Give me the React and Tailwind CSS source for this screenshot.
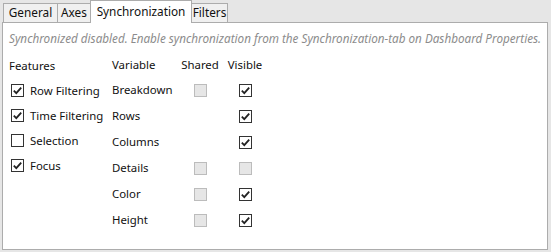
import React from 'react';

const FONT = { fontFamily: '"Noto Sans", "Open Sans", sans-serif' };

const tabs = [
  { label: 'General', width: 'w-[55px]' },
  { label: 'Axes', width: 'w-[34px]' },
  { label: 'Synchronization', width: 'w-[102px]', active: true },
  { label: 'Filters', width: 'w-[37px]' },
];

const features = [
  { label: 'Row Filtering', checked: true },
  { label: 'Time Filtering', checked: true },
  { label: 'Selection', checked: false },
  { label: 'Focus', checked: true },
];

// shared: null = no box, 'disabled' = greyed box
const variables = [
  { label: 'Breakdown', shared: 'disabled', visible: 'checked' },
  { label: 'Rows', shared: null, visible: 'checked' },
  { label: 'Columns', shared: null, visible: 'checked' },
  { label: 'Details', shared: 'disabled', visible: 'disabled' },
  { label: 'Color', shared: 'disabled', visible: 'checked' },
  { label: 'Height', shared: 'disabled', visible: 'checked' },
];

const CheckBox = ({ state }) => {
  if (state === 'disabled') {
    return <div className="w-[13px] h-[13px] border border-[#bcbcbc] bg-[#e6e6e6]" />;
  }
  return (
    <div className="w-[13px] h-[13px] border border-[#333333] bg-white flex items-center justify-center">
      {state === 'checked' && (
        <svg width="11" height="11" viewBox="0 0 11 11">
          <path d="M1.8 5.6 L4.3 8.1 L9.2 2.6" fill="none" stroke="#222" strokeWidth="1.8" />
        </svg>
      )}
    </div>
  );
};

const App = () => {
  return (
    <div
      className="w-[551px] h-[252px] bg-[#e6e6e6] pl-[2px] pr-[3px] pb-[2px] flex flex-col text-[11.4px] text-[#111111] whitespace-nowrap"
      style={FONT}
    >
      {/* Tab strip */}
      <div className="flex items-end h-[22px] pl-[1px]">
        {tabs.map((t, i) =>
          t.active ? (
            <div
              key={t.label}
              className={`${t.width} h-[23px] -mb-px relative z-10 bg-white border border-b-0 border-[#acacac] flex items-center justify-center text-[11.8px] ${i > 0 ? '-ml-px' : ''}`}
            >
              {t.label}
            </div>
          ) : (
            <div
              key={t.label}
              className={`${t.width} h-[19px] bg-[#f0f0f0] border border-b-0 border-[#acacac] flex items-center justify-center text-[11.8px] ${i > 0 ? '-ml-px' : ''}`}
            >
              {t.label}
            </div>
          )
        )}
      </div>

      {/* Panel */}
      <div className="flex-1 bg-white border border-[#acacac] pl-[6px] pt-[7px]">
        <div className="italic text-[11.7px] text-[#8c8c8c] leading-[16px]">
          Synchronized disabled. Enable synchronization from the Synchronization-tab on Dashboard Properties.
        </div>

        <div className="flex mt-[7px]">
          {/* Features */}
          <div className="w-[103px] flex flex-col">
            <div className="h-[25px] flex items-center">Features</div>
            {features.map((f) => (
              <div key={f.label} className="h-[25px] flex items-center gap-[6px] pl-[2px]">
                <CheckBox state={f.checked ? 'checked' : 'unchecked'} />
                <span>{f.label}</span>
              </div>
            ))}
          </div>

          {/* Variables */}
          <div className="grid grid-cols-[64px_48px_42px]">
            <div className="h-[24px] flex items-center">Variable</div>
            <div className="h-[24px] flex items-center justify-center">Shared</div>
            <div className="h-[24px] flex items-center justify-center">Visible</div>
            {variables.map((v) => (
              <React.Fragment key={v.label}>
                <div className="h-[26px] flex items-center">{v.label}</div>
                <div className="h-[26px] flex items-center justify-center">
                  {v.shared && <CheckBox state={v.shared} />}
                </div>
                <div className="h-[26px] flex items-center justify-center">
                  <CheckBox state={v.visible} />
                </div>
              </React.Fragment>
            ))}
          </div>
        </div>
      </div>
    </div>
  );
};

export default App;
